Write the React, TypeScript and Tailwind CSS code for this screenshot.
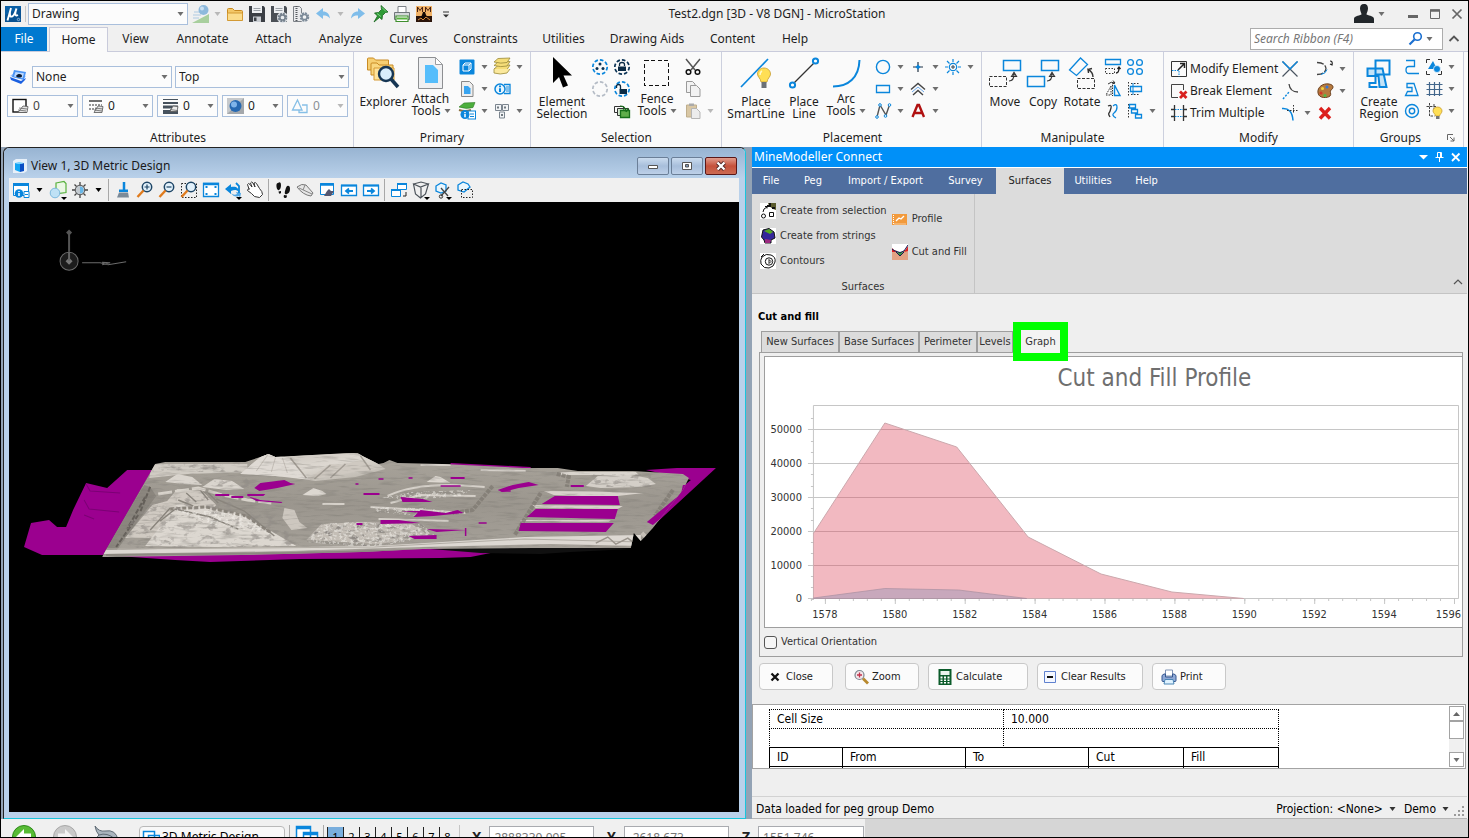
import React, { ReactNode, useState } from "react";

const BLUE = "#0a86dc";

/* ---------- shared pieces ---------- */

function Caret({ className = "text-[#6e6e6e]" }: { className?: string }) {
  return (
    <svg viewBox="0 0 7 4" className={`h-1 w-[7px] shrink-0 ${className}`} aria-hidden="true">
      <path d="M0.5 0h6L3.5 4z" fill="currentColor" />
    </svg>
  );
}

function IconCell({ label, children }: { label: string; children: ReactNode }) {
  return (
    <button aria-label={label} className="flex h-[22px] w-[22px] shrink-0 items-center justify-center">
      <svg viewBox="0 0 22 22" className="h-[22px] w-[22px]" fill="none">
        {children}
      </svg>
    </button>
  );
}

function CaretCell({ label = "More", faded = false }: { label?: string; faded?: boolean }) {
  return (
    <button aria-label={label} className="flex h-[22px] w-[13px] shrink-0 items-center justify-center">
      <Caret className={faded ? "text-[#b8b8b8]" : "text-[#6e6e6e]"} />
    </button>
  );
}

function Combo({ label, value, className, icon, faded }: { label: string; value: string; className: string; icon?: ReactNode; faded?: boolean }) {
  return (
    <label className={`flex h-[22px] items-center border border-[#a9bfdc] bg-[#fcfcfc] px-[3px] ${className}`}>
      {icon}
      <select aria-label={label} defaultValue={value} className={`h-5 min-w-0 flex-1 appearance-none bg-transparent text-xs outline-none ${faded ? "text-[#8b8f94]" : "text-[#1e1e1e]"}`}>
        <option>{value}</option>
      </select>
      <Caret className={faded ? "text-[#b8b8b8]" : "text-[#6e6e6e]"} />
    </label>
  );
}

function BigButton({ lines, className, caret, icon }: { lines: string[]; className: string; caret?: boolean; icon: ReactNode }) {
  return (
    <button className={`flex shrink-0 flex-col items-center pt-1 text-xs leading-3 whitespace-nowrap text-[#1e1e1e] ${className}`}>
      <svg viewBox="0 0 36 34" className="h-[34px] w-9 shrink-0" fill="none">
        {icon}
      </svg>
      <span className={`flex flex-col items-center ${caret ? "pt-[3px]" : "pt-1.5"}`}>
        <span>{lines[0]}</span>
        {lines[1] && (
          <span className="flex items-center gap-[3px]">
            {lines[1]}
            {caret && <Caret />}
          </span>
        )}
      </span>
    </button>
  );
}

function Group({ title, className, children, corner }: { title: string; className: string; children: ReactNode; corner?: ReactNode }) {
  return (
    <section className={`flex shrink-0 flex-col border-r border-[#ccd0de] ${className}`}>
      <div className="flex h-[78px] items-start">{children}</div>
      <footer className="flex h-4 items-center justify-center text-xs text-[#1e1e1e]">
        <span className="flex-1 pr-1 text-center">{title}</span>
        {corner}
      </footer>
    </section>
  );
}

/* ---------- title bar ---------- */

function TitleBar() {
  return (
    <header className="flex h-[26px] shrink-0 items-center pl-1 text-xs">
      <svg viewBox="0 0 16 16" className="h-4 w-4" aria-label="MicroStation">
        <rect width="16" height="16" fill="#0b5fa5" />
        <path d="M0 16V9L16 2v14z" fill="#084a86" opacity=".6" />
        <path d="M6 2 2.500 14.500M5 6c-.500 4 .500 5 2 4.500s3-3 4.500-8M11.500 2.500c-2 6-1.500 8 1.500 6.500" stroke="#fff" strokeWidth="1.900" fill="none" />
        <circle cx="13.500" cy="13.500" r="1.200" fill="none" stroke="#cfe3f5" strokeWidth=".6" />
      </svg>
      <span className="mr-0.5 ml-1 h-4 w-px bg-[#c8c8c8]" />
      <Combo label="Workflow" value="Drawing" className="w-[160px]" />
      <div className="ml-px flex items-center">
        <IconCell label="Model">
          <path d="M3 20 20 11v9z" fill="#a8cf9e" />
          <path d="M5 9h8M4 12h8M4 15h6" stroke="#c3d6e6" strokeWidth="1.500" />
          <circle cx="14.500" cy="7" r="5" fill="#8db9dc" />
          <circle cx="13" cy="5.500" r="2" fill="#c9e0f1" />
        </IconCell>
        <CaretCell faded />
        <IconCell label="Open">
          <path d="M3.500 17V6.500q0-1 1-1h4l2 2h7q1 0 1 1V17z" fill="#f3c766" stroke="#c88a20" />
          <path d="M3.500 17.500V10h15v7.500z" fill="#fbdc8b" stroke="#d39a34" />
        </IconCell>
        <IconCell label="Save">
          <path d="M3 3h14.500l1.500 1.500V19H3z" fill="#3b3f45" />
          <path d="M6 3h10v7H6z" fill="#eef0f2" />
          <path d="M7.500 5.500h7M7.500 7.500h7" stroke="#9aa0a6" />
          <path d="M7 13.500h8V19H7z" fill="#c9cdd2" />
          <path d="M8 14.500h2.500V18H8z" fill="#3b3f45" />
        </IconCell>
        <IconCell label="Save Settings">
          <path d="M3 3h14.500l1.500 1.500V19H3z" fill="#4b5056" />
          <path d="M6 3h10v7H6z" fill="#eef0f2" />
          <path d="M7.500 5.500h7M7.500 7.500h7" stroke="#9aa0a6" />
          <circle cx="14.500" cy="14.500" r="5.500" fill="#e8ebee" />
          <circle cx="14.500" cy="14.500" r="3.600" stroke="#76828e" strokeWidth="2.400" strokeDasharray="2 .8" />
          <circle cx="14.500" cy="14.500" r="2.600" stroke="#76828e" strokeWidth="1.500" />
        </IconCell>
        <IconCell label="Compress">
          <path d="M3.500 3.500h6l2 2V18.500h-8z" fill="#e9eaec" stroke="#7c8187" />
          <path d="M6.500 3v15" stroke="#55595e" strokeWidth="2" strokeDasharray="1 1" />
          <circle cx="14.500" cy="14" r="5" fill="#f2f3f4" />
          <circle cx="14.500" cy="14" r="3.600" stroke="#7c8a98" strokeWidth="2.400" strokeDasharray="2 .8" />
          <circle cx="14.500" cy="14" r="2.600" stroke="#7c8a98" strokeWidth="1.500" />
        </IconCell>
        <IconCell label="Undo">
          <path d="m4 10.500 7-5.500v3.500c4 0 6.500 2.500 7 7-2-2.500-4-3-7-3V16z" fill="#7fbdea" />
        </IconCell>
        <CaretCell faded />
        <IconCell label="Redo">
          <path d="m18 10.500-7-5.500v3.500c-4 0-6.500 2.500-7 7 2-2.500 4-3 7-3V16z" fill="#7fbdea" />
        </IconCell>
        <IconCell label="Pin">
          <path d="m12 2.500 7 6.500-2.500.500-3 3-.500 4-2.500-2-5.500 4.500 3.500-6-3-3 4-.500 3-3z" fill="#2d9a35" stroke="#16641c" strokeWidth=".8" />
          <path d="m13 4.500 4 4M8 10.500l4 3" stroke="#7fd184" />
        </IconCell>
        <IconCell label="Print">
          <path d="M7 3.500h8v6H7z" fill="#fff" stroke="#7c8187" />
          <path d="M3.500 9.500h15v7h-15z" fill="#d5d8da" stroke="#70767b" />
          <path d="M5 13h12v5.500H5z" fill="#fff" stroke="#3f8f2e" strokeWidth="1.200" />
          <path d="M6 15.500h10" stroke="#58b13e" strokeWidth="2" />
        </IconCell>
        <IconCell label="MineModeller">
          <rect x="3" y="3" width="16" height="16" fill="#f1b368" />
          <rect x="3" y="13" width="16" height="6" fill="#2a140a" />
          <path d="M4.500 9V4l2.500 3.500L9.500 4v5M12.500 9V4L15 7.500 17.500 4v5" stroke="#4a2313" />
          <path d="m7 16 2-4 1-3h2l1 3 3 4z" fill="#120805" />
          <path d="m5 17 3-2 2 2 3-3 4 3" stroke="#d98a3a" />
        </IconCell>
        <IconCell label="Customize">
          <path d="M8 9h6" stroke="#333" />
          <path d="M8 11.500h6l-3 3z" fill="#333" />
        </IconCell>
      </div>
      <h1 className="flex-1 text-center text-xs text-[#1e1e1e]">Test2.dgn [3D - V8 DGN] - MicroStation</h1>
      <div className="ml-64 flex items-center">
        <IconCell label="Account">
          <path d="M11 1c3 0 4 2 4 4.500S13.500 10 13.500 11.500C17 13 21 13 21 16v4H1v-4c0-3 4-3 7.500-4.500C8.500 10 7 8 7 5.500S8 1 11 1z" fill="#22272b" />
        </IconCell>
        <CaretCell />
        <span className="w-3.5" />
        <IconCell label="Minimize"><path d="M6 13.500h10" stroke="#666" strokeWidth="3" /></IconCell>
        <IconCell label="Restore">
          <path d="M6.500 7h9v8.500h-9z" stroke="#666" />
          <path d="M6 7.500h10" stroke="#666" strokeWidth="2.500" />
        </IconCell>
        <IconCell label="Close"><path d="m6.500 6.500 9 9m0-9-9 9" stroke="#666" strokeWidth="1.700" /></IconCell>
      </div>
    </header>
  );
}

/* ---------- ribbon tabs ---------- */

const TABS: [string, string][] = [
  ["View", "w-[55px]"],
  ["Annotate", "w-[79px]"],
  ["Attach", "w-[63px]"],
  ["Analyze", "w-[71px]"],
  ["Curves", "w-[65px]"],
  ["Constraints", "w-[89px]"],
  ["Utilities", "w-[67px]"],
  ["Drawing Aids", "w-[100px]"],
  ["Content", "w-[71px]"],
  ["Help", "w-[54px]"],
];

function RibbonTabs() {
  return (
    <nav className="flex h-[25px] shrink-0 items-stretch border-b border-[#c9cbdb] text-xs text-[#1e1e1e]">
      <button className="w-[46px] bg-[#0079d0] text-white">File</button>
      <button className="-mb-px ml-0.5 w-[59px] border border-b-0 border-[#c9cbdb] bg-[#fafafa]">Home</button>
      {TABS.map(([name, width]) => (
        <button key={name} className={`shrink-0 ${width}`}>{name}</button>
      ))}
      <div className="flex flex-1 items-start justify-end pr-[3px]">
        <label className="mt-px flex h-[22px] w-[193px] items-center border border-[#acacac] bg-white pl-[3px]">
          <input aria-label="Search Ribbon" placeholder="Search Ribbon (F4)" className="w-[150px] bg-transparent text-xs italic outline-none placeholder:text-[#767676]" />
          <svg viewBox="0 0 22 22" className="h-[22px] w-[22px]" fill="none">
            <circle cx="13.500" cy="8.500" r="3.800" stroke="#1a6fd0" strokeWidth="1.600" />
            <path d="m10.500 11.500-5 5" stroke="#1a6fd0" strokeWidth="2.200" />
          </svg>
          <Caret />
        </label>
        <IconCell label="Collapse ribbon"><path d="m6.500 14 4.500-4.500 4.500 4.500" stroke="#555" strokeWidth="1.800" /></IconCell>
      </div>
    </nav>
  );
}

/* ---------- ribbon ---------- */

const smallIcon = "mr-0.5 h-[18px] w-5 shrink-0";

function AttributesGroup() {
  return (
    <Group title="Attributes" className="w-[353px] pl-1.5">
      <div className="flex flex-col gap-[7px] pt-[14px]">
        <div className="flex items-center">
          <svg viewBox="0 0 18 14" className="mr-[3px] ml-0.5 h-[14px] w-[18px]">
            <path d="M1 6 14 9.500 17 6 5 3z" fill="#9fc4ff" />
            <path d="m5 0 12 2-2 8L3 7z" fill="#4c95f5" />
            <path d="m6.500 2 8.500 1.200-1.500 5L5 6.500z" fill="#bcd9ff" />
            <path d="M7 6c2-3 6-2 6 0S8 8 7 6z" fill="#0b1c34" />
            <path d="m1 7 11 4 5-3-1 2-4 4L2 10z" fill="#1a5fe0" />
          </svg>
          <Combo label="Template" value="None" className="ml-0.5 w-[140px]" />
          <Combo label="Level" value="Top" className="ml-[3px] w-[174px]" />
        </div>
        <div className="flex gap-1">
          <Combo label="Color" value="0" className="w-[71px] [&_select]:text-[#444]" icon={
            <svg viewBox="0 0 20 18" className={smallIcon}>
              <rect x="2" y="2.500" width="13" height="12.500" fill="#fff" stroke="#111" strokeWidth="1.400" />
              <path d="M7 15.500 12 9l5 .5-1 6z" fill="#e4e4e4" stroke="#555" strokeWidth=".8" /><path d="m7 13 8 1M8 11l8 1" stroke="#666" strokeWidth=".8" />
            </svg>} />
          <Combo label="Line style" value="0" className="w-[71px]" icon={
            <svg viewBox="0 0 20 18" className={smallIcon}>
              <path d="M3 4h13" stroke="#333" strokeWidth="1.400" /><path d="M3 8h13M3 12h13" stroke="#333" strokeWidth="1.200" strokeDasharray="2 1" />
              <path d="M8 15.500 12 9l5 .5-1 6z" fill="#e4e4e4" stroke="#555" strokeWidth=".8" /><path d="m8 13 8 1M9 11l8 1" stroke="#666" strokeWidth=".8" />
            </svg>} />
          <Combo label="Line weight" value="0" className="w-[61px]" icon={
            <svg viewBox="0 0 20 18" className={smallIcon}>
              <path d="M2 2.500h15" stroke="#47525d" /><path d="M2 6h15" stroke="#47525d" strokeWidth="2" /><path d="M2 10h15" stroke="#47525d" strokeWidth="3" /><path d="M2 15h15" stroke="#47525d" strokeWidth="4" />
              <path d="M9 14.500 12 9l5 .5-1 5z" fill="#ececec" stroke="#555" strokeWidth=".8" /><path d="m9 12.500 7 1" stroke="#666" strokeWidth=".8" />
            </svg>} />
          <Combo label="Material" value="0" className="w-[61px]" icon={
            <svg viewBox="0 0 20 18" className={smallIcon}>
              <rect x="1" y="1" width="17" height="16" fill="#c6c9cc" /><path d="M1 17 18 1v16z" fill="#a4a8ac" />
              <circle cx="9.500" cy="9" r="6" fill="#2769b2" /><circle cx="8" cy="7.500" r="3" fill="#7fb4ea" />
            </svg>} />
          <Combo label="Transparency" value="0" faded className="w-[61px]" icon={
            <svg viewBox="0 0 20 18" className={smallIcon} fill="none">
              <path d="m1.500 13 5-10 4.500 10zM11 8h5v7.500H8V13" stroke="#86bfe6" strokeWidth="1.300" />
            </svg>} />
        </div>
      </div>
    </Group>
  );
}

const cube = (
  <>
    <rect x="3.500" y="3.500" width="15" height="15" rx="1" fill={BLUE} />
    <path d="M7 9h6v6H7zM7 9l2-2h6v6l-2 2M13 9l2-2" stroke="#fff" />
  </>
);

function PrimaryGroup() {
  return (
    <Group title="Primary" className="w-[177px] pl-1">
      <BigButton lines={["Explorer"]} className="w-[50px]" icon={
        <>
          <path d="M2.500 14V3q0-1 1-1h5l2 2h13v10z" fill="#f6cf72" stroke="#c98b24" />
          <path d="M6 19V8q0-1 1-1h5l2 2h14v10z" fill="#f9d77f" stroke="#c98b24" />
          <path d="M9 24V12h20v12z" fill="#ffe39a" stroke="#d59a35" />
          <circle cx="21" cy="18" r="7" fill="#d9eefb" stroke="#163654" strokeWidth="2.400" />
          <path d="m26 23 7 8" stroke="#163654" strokeWidth="3.500" />
        </>} />
      <BigButton lines={["Attach", "Tools"]} caret className="w-[46px]" icon={
        <>
          <path d="M5.500 1.500h17l7 7v24h-24z" fill="#eff0f2" stroke="#8d8f92" />
          <path d="M22.500 1.500v7h7z" fill="#fff" stroke="#9b9da0" />
          <path d="M12 9h8l5 5v13H12z" fill="#55bdfb" />
        </>} />
      <div className="ml-0.5 grid grid-cols-[22px_13px_22px_13px] pt-1">
        <IconCell label="Models">{cube}</IconCell>
        <CaretCell />
        <IconCell label="Levels">
          {[13, 9.5, 6].map((y) => (
            <path key={y} d={`M3 ${y} l4-3.500 12-.500-3 4.500q-6 1.500-13-.500z`} fill="#f5dd78" stroke="#9b8a3a" strokeWidth=".8" />
          ))}
          <path d="M3 13v4q6 2 13 0l3-4" stroke="#9b8a3a" strokeWidth=".8" fill="#fbe99d" />
        </IconCell>
        <CaretCell />
        <IconCell label="References">
          <path d="M5.500 3.500h8l3.500 3.500v11.500H5.500z" fill="#eee" stroke="#888" />
          <path d="M8 8h4l2.500 2.500V16H8z" fill="#38a4f0" />
        </IconCell>
        <CaretCell />
        <IconCell label="Properties">
          <path d="M13 6.500h6v9h-6" stroke={BLUE} strokeWidth="1.300" /><path d="M15 9h3M15 11h3M15 13h3" stroke={BLUE} />
          <circle cx="9" cy="11" r="5" fill="#e8f5fd" stroke={BLUE} strokeWidth="1.500" />
          <path d="M9 7.500v1.700M9 10.200V14" stroke={BLUE} strokeWidth="2" />
        </IconCell>
        <span />
        <IconCell label="Level Manager">
          <path d="m3 7 5-4 11-.500-2 5q-7 2-14-.500z" fill="#4caf3d" stroke="#2d7a24" strokeWidth=".6" />
          <path d="M3 10q6 2 12 0" stroke="#8a7040" strokeWidth="2" />
          <rect x="12" y="11" width="7.500" height="8" fill="#fff" stroke={BLUE} /><path d="M14 14h4M14 16.500h4" stroke={BLUE} />
          <circle cx="9" cy="14.500" r="4.500" fill={BLUE} /><path d="M9 12v1.200M9 14v3.200" stroke="#fff" strokeWidth="1.500" />
        </IconCell>
        <CaretCell />
        <IconCell label="Keyin">
          <path d="M4.500 4.500h6v6h-6zM11.500 4.500h6v6h-6zM8.500 12h5v6h-5z" fill="#f2f4f6" stroke="#7b858f" />
          <path d="M7 6.500v2M14 6.500v2M11 14v2" stroke="#46505a" strokeWidth="1.500" />
        </IconCell>
        <CaretCell />
      </div>
    </Group>
  );
}

function SelectionGroup() {
  const ring = (color: string) => <circle cx="11" cy="11" r="7.200" stroke={color} strokeWidth="1.700" strokeDasharray="3.600 2" />;
  return (
    <Group title="Selection" className="w-[191px] pl-[5px]">
      <BigButton lines={["Element", "Selection"]} className="w-[52px]" icon={<path d="M9 1v26l6-6 4 10.500 5-2-4.500-10H28z" fill="#000" />} />
      <div className="ml-px grid grid-cols-[22px_22px] pt-1">
        <IconCell label="Select all">{ring(BLUE)}<circle cx="11" cy="8" r="1.500" fill="#0b3355" /><circle cx="8" cy="12.500" r="1.500" fill="#0b3355" /><circle cx="14" cy="12.500" r="1.500" fill="#0b3355" /></IconCell>
        <IconCell label="Lock">{ring("#0b3355")}<path d="M7 10.500h8V15H7z" fill="#0b2b45" /><path d="M8.500 10V8.500q0-2 2.500-2t2.500 2V10" stroke="#0b2b45" strokeWidth="1.300" /></IconCell>
        <IconCell label="Select none">{ring("#b5bcc6")}</IconCell>
        <IconCell label="Unlock">{ring(BLUE)}<path d="M8.500 11h7.500v5H8.500z" fill="#0b2b45" /><path d="M9.500 11V8.500q0-2-2-2t-2 2V10" stroke="#0b2b45" strokeWidth="1.300" /></IconCell>
        <span />
        <IconCell label="Change selection">
          <path d="M3.500 6.500h9v6h-9z" stroke="#333" /><path d="M6.500 8.500h11v7h-11z" fill="#d6ead2" stroke="#333" />
          <path d="M9.500 10.500h9v7h-9z" fill="#5fae4a" stroke="#17701a" strokeWidth="1.300" /><path d="M9 6q5 0 6 5M12 9.500l3.500 2L17 8" stroke="#17701a" strokeWidth="1.200" />
        </IconCell>
      </div>
      <BigButton lines={["Fence", "Tools"]} caret className="w-12" icon={<path d="M5.500 4.500h24v25h-24z" stroke="#111" strokeDasharray="4 2.500" shapeRendering="crispEdges" />} />
      <div className="ml-px grid grid-cols-[22px_13px] pt-1">
        <IconCell label="Cut">
          <path d="m4 3 9 11M18 3 9 14" stroke="#555" strokeWidth="1.500" />
          <circle cx="6.500" cy="16" r="2.300" stroke="#111" strokeWidth="1.500" /><circle cx="15.500" cy="16" r="2.300" stroke="#111" strokeWidth="1.500" />
        </IconCell>
        <span />
        <IconCell label="Copy to clipboard">
          <path d="M4.500 3.500h6l2.500 2.500v8.500H4.500z" fill="#f2f2f2" stroke="#9a9a9a" /><path d="M8.500 7.500h6L18 11v7.500H8.500z" fill="#f2f2f2" stroke="#9a9a9a" />
        </IconCell>
        <span />
        <IconCell label="Paste">
          <path d="M4.500 5h10v12h-10z" fill="#d9c7a4" stroke="#bfae8c" /><path d="M7 3.500h5V6H7z" fill="#aaa" /><path d="M9.500 8.500h5L18 12v6.500H9.500z" fill="#ececec" stroke="#b5b5b5" />
        </IconCell>
        <CaretCell faded />
      </div>
    </Group>
  );
}

function PlacementGroup() {
  return (
    <Group title="Placement" className="w-[260px] pl-1.5">
      <BigButton lines={["Place", "SmartLine"]} className="w-14" icon={
        <>
          <path d="M3 31 30 3" stroke={BLUE} strokeWidth="1.700" />
          <path d="M26 12c4 0 6.500 3 6.500 6s-3 4-3.500 8h-6c-.500-4-3.500-5-3.500-8s2.500-6 6.500-6z" fill="#ffdf55" stroke="#c79a2c" strokeWidth=".8" />
          <path d="M24 15q-2 1-2 4" stroke="#fff8cc" strokeWidth="1.500" /><path d="M23.500 26h5v6h-5z" fill="#6b7076" />
        </>} />
      <BigButton lines={["Place", "Line"]} className="ml-px w-[38px]" icon={
        <><path d="M7 28 29 6" stroke="#333" strokeWidth="1.200" /><circle cx="6.500" cy="29" r="2.600" stroke={BLUE} strokeWidth="2" fill="#fff" /><circle cx="29.500" cy="5" r="2.600" stroke={BLUE} strokeWidth="2" fill="#fff" /></>} />
      <BigButton lines={["Arc", "Tools"]} caret className="w-[46px]" icon={<path d="M5 30.500C20 30.500 31 22 31.500 4" stroke={BLUE} strokeWidth="2" />} />
      <div className="ml-[3px] grid grid-cols-[22px_13px_22px_13px_22px_13px] pt-1">
        <IconCell label="Circle"><circle cx="11" cy="11" r="6.600" stroke={BLUE} strokeWidth="1.400" /></IconCell>
        <CaretCell />
        <IconCell label="Point"><path d="M11 6v10M6 11h10" stroke="#234" strokeWidth="1.200" /><path d="M11 8.500 13.500 11 11 13.500 8.500 11z" fill={BLUE} /></IconCell>
        <CaretCell />
        <IconCell label="Active point">
          <path d="M11 3v3M11 16v3M3 11h3M16 11h3M5 5l2.500 2.500M14.500 14.500 17 17M17 5l-2.500 2.500M7.500 14.500 5 17" stroke={BLUE} strokeWidth="1.200" /><circle cx="11" cy="11" r="3.700" stroke={BLUE} strokeWidth="1.200" /><path d="M9 11h4M11 9v4" stroke="#345" />
        </IconCell>
        <CaretCell />
        <IconCell label="Block"><path d="M4.500 7.500h13v7h-13z" stroke={BLUE} strokeWidth="1.300" /></IconCell>
        <CaretCell />
        <IconCell label="Parallel">
          <path d="m4 11.500 7-6 7 6" stroke="#444" strokeWidth="1.400" /><path d="m5 14 6-5 6 5" stroke="#6aa7e8" /><path d="m6 17 5-4.500 5 4.500" stroke="#444" strokeWidth="1.400" />
        </IconCell>
        <CaretCell /><span /><span />
        <IconCell label="Curve">
          <path d="m5 17 3-12 6 10 3.500-10" stroke="#555" strokeWidth="1.400" />
          {[[5, 17], [8, 5], [13.5, 16], [17.5, 5]].map(([x, y]) => <circle key={x} cx={x} cy={y} r="1.300" fill="#fff" stroke={BLUE} />)}
        </IconCell>
        <CaretCell />
        <IconCell label="Text"><path d="m5.500 17 5-12h1.500l5 12M7.500 13h7.500" stroke="#b01010" strokeWidth="2.400" /></IconCell>
        <CaretCell />
      </div>
    </Group>
  );
}

function ManipulateGroup() {
  return (
    <Group title="Manipulate" className="w-[182px] pl-1">
      <BigButton lines={["Move"]} className="w-[38px]" icon={
        <><path d="M16.500 4.500h17v10h-17z" stroke={BLUE} strokeWidth="1.500" /><path d="M2.500 20.500h17v10h-17z" stroke="#333" strokeDasharray="3 1.500" /><path d="M22 25q5 0 5-7M24.500 20.500l2.500-4 2.500 4z" stroke="#333" strokeWidth="1.200" /></>} />
      <BigButton lines={["Copy"]} className="w-[38px]" icon={
        <><path d="M16.500 4.500h17v10h-17zM2.500 20.500h17v10h-17z" stroke={BLUE} strokeWidth="1.500" /><path d="M22 25q5 0 5-7M24.500 20.500l2.500-4 2.500 4z" stroke="#333" strokeWidth="1.200" /></>} />
      <BigButton lines={["Rotate"]} className="w-10" icon={
        <><path d="m5.500 14 11-12 7 6.500-11 11z" stroke={BLUE} strokeWidth="1.300" /><path d="M13.500 22.500h17v10h-17z" stroke="#333" strokeDasharray="3 1.500" /><path d="M29 21q0-5-5-7.500l.500 3.500M24 13.500l4-1" stroke="#333" strokeWidth="1.400" /></>} />
      <div className="grid grid-cols-[22px_22px_13px] pt-1">
        <IconCell label="Stretch"><path d="M3.500 3.500h15v5h-15z" stroke={BLUE} strokeWidth="1.300" /><path d="M3.500 12.500h9v5h-9z" stroke="#333" strokeDasharray="1.500 1.500" /><path d="M14 17q3 0 3-5M15.500 13l1.500-2 1.500 2" stroke="#222" strokeWidth="1.300" /></IconCell>
        <IconCell label="Array">{[[6.5, 6.5], [15.5, 6.5], [6.5, 15.5], [15.5, 15.5]].map(([x, y], i) => <circle key={i} cx={x} cy={y} r="2.900" stroke={BLUE} strokeWidth="1.300" />)}</IconCell>
        <span />
        <IconCell label="Mirror"><path d="M10.500 7v11M9 8v9H4z" stroke="#333" strokeDasharray="1.500 1" /><path d="M12.500 7v10.500H18z" stroke={BLUE} strokeWidth="1.400" /><path d="M6 6q3-3 7-1l-2-2.500M13 5l-3 1" stroke="#333" /></IconCell>
        <IconCell label="Align"><path d="M4.500 4v14" stroke="#333" strokeDasharray="1.500 1.500" /><path d="M7 5.500h8M7 16.500h8" stroke="#333" strokeDasharray="1.500 1.500" /><path d="M6.500 8.500h11v5h-11z" stroke={BLUE} strokeWidth="1.300" /><path d="M9 5v12" stroke={BLUE} /></IconCell>
        <span />
        <IconCell label="Move parallel"><path d="M6 6q4-2 3 2t-2 5 1 4" stroke="#333" strokeWidth="1.300" /><path d="M11 6q4-3 4 1t-3 6 2 5" stroke={BLUE} strokeWidth="1.300" /></IconCell>
        <IconCell label="Align edges"><path d="M4.500 4v14" stroke="#333" strokeDasharray="1.500 1.500" /><path d="M5.500 4.500h6v3.500h-6zM7.500 9.500h6V13h-6zM11.500 14.500h6V18h-6z" stroke={BLUE} strokeWidth="1.300" /></IconCell>
        <CaretCell />
      </div>
    </Group>
  );
}

function ModifyGroup() {
  const row = "flex h-[22px] items-center text-xs whitespace-nowrap text-[#1e1e1e]";
  const ic = "h-[22px] w-[22px]";
  return (
    <Group title="Modify" className="w-[190px] pl-1">
      <div className="flex w-[111px] flex-col pt-1.5">
        <button className={row}>
          <svg viewBox="0 0 22 22" className={ic} fill="none"><path d="M3.500 3.500h15v15h-15z" stroke="#333" /><path d="M4 12.500h7v6" stroke={BLUE} strokeDasharray="1.500 1" /><path d="m10 12 6-6m-4-.500h4.500V10" stroke="#222" strokeWidth="1.500" /></svg>
          Modify Element
        </button>
        <button className={row}>
          <svg viewBox="0 0 22 22" className={ic} fill="none"><path d="M10 17.500H3.500v-13h12V10" stroke="#444" /><path d="m12 11.500 6.500 6.500m0-6.500L12 18" stroke="#d8201e" strokeWidth="2.800" /></svg>
          Break Element
        </button>
        <button className={row}>
          <svg viewBox="0 0 22 22" className={ic} fill="none"><path d="M6.500 3v16M15.500 3v16M3 7.500h3M16 7.500h3M3 14.500h3M16 14.500h3" stroke="#333" strokeWidth="1.300" /><path d="M7 7.500h8M7 14.500h8" stroke={BLUE} strokeDasharray="1.500 1" /></svg>
          Trim Multiple
        </button>
      </div>
      <div className="grid grid-cols-[22px_13px_22px_13px] pt-1.5">
        <IconCell label="Trim"><path d="m3.500 18.500 15-15M3.500 3.500l15 15" stroke="#4a5560" strokeWidth="1.200" /><path d="m3.500 3.500 7.500 7.500 7.500-7.500" stroke={BLUE} strokeWidth="1.400" /></IconCell>
        <span />
        <IconCell label="Insert vertex"><path d="M3 4.500q8 0 9 6-1 6-9 6" stroke="#444" strokeDasharray="7 1.500" strokeWidth="1.300" /><path d="M7 16.500q5-1 6-5" stroke={BLUE} /><path d="M16 3q3 0 2 4l-2-1" stroke="#222" strokeWidth="1.200" /></IconCell>
        <CaretCell />
        <IconCell label="Trim to intersection"><path d="m4 19 6-7" stroke={BLUE} strokeDasharray="2 1.500" strokeWidth="1.400" /><path d="M10 4q1 8 9 8" stroke="#444" strokeWidth="1.300" /></IconCell>
        <span />
        <IconCell label="Change attributes">
          <path d="M4 13C3 7 9 3 15 4s4 5 2 6 1 4-1 6-11 3-12-3z" fill="#b67a3e" stroke="#6f4320" /><circle cx="13" cy="7" r="1.500" fill="#3478d8" /><circle cx="8.500" cy="8.500" r="1.500" fill="#f3d23b" /><circle cx="7" cy="13" r="1.500" fill="#d9342b" /><circle cx="11" cy="15.500" r="1.500" fill="#54b948" />
        </IconCell>
        <CaretCell />
        <IconCell label="Fillet"><path d="M3 6.500q10-1 11 12" stroke={BLUE} strokeWidth="1.500" /><path d="M14.500 3v9M8 8.500h11" stroke="#333" strokeDasharray="1.500 1.500" /></IconCell>
        <CaretCell />
        <IconCell label="Delete"><path d="m6 6 10 10.500M16 6 6 16.500" stroke="#dc1f1c" strokeWidth="3.400" /></IconCell>
        <span />
      </div>
    </Group>
  );
}

function GroupsGroup() {
  return (
    <Group title="Groups" className="w-[110px] pl-1" corner={
      <button aria-label="Groups settings" className="pr-2"><svg viewBox="0 0 8 8" className="h-2 w-2" fill="none" stroke="#666"><path d="M.500 6V.500H6M3 3l4 4M7 3.500V7H3.500" /></svg></button>
    }>
      <BigButton lines={["Create", "Region"]} className="w-[42px]" icon={
        <>
          <path d="M6.500 12.500h15l4 18.500h-7l-1-11h-11z" fill="#a9d8f7" fillOpacity=".7" stroke={BLUE} strokeWidth="2" />
          <path d="M14.500 4.500h14v14h-14z" stroke={BLUE} strokeWidth="2" />
          <path d="M14.500 18.500v8.500h-6v4h8" stroke={BLUE} strokeWidth="2" />
        </>} />
      <div className="ml-px grid grid-cols-[22px_22px_13px] pt-1">
        <IconCell label="Complex chain"><path d="M5 4.500h8.500v6H8q-3 0-3 3.500t3 3.500h10" stroke={BLUE} strokeWidth="1.300" /></IconCell>
        <IconCell label="Add to group"><path d="M3.500 7V3.500H7M15 3.500h3.500V7M18.500 15v3.500H15M7 18.500H3.500V15" stroke="#333" /><path d="m5 13 5-8 4 8z" fill={BLUE} /><circle cx="14" cy="13" r="3.500" fill={BLUE} stroke="#fff" strokeWidth=".7" /></IconCell>
        <CaretCell />
        <IconCell label="Complex shape"><path d="M6 5.500h7l4 12H4.500l2-4H11V9.500H6z" stroke={BLUE} strokeWidth="1.300" /></IconCell>
        <IconCell label="Named group"><path d="M6.500 4v14M11.500 4v14M16.500 4v14M3.500 6.500h16M3.500 11.500h16M3.500 16.500h16" stroke="#43678c" strokeWidth="1.200" /></IconCell>
        <CaretCell />
        <IconCell label="Group hole"><circle cx="11" cy="11" r="6.500" stroke={BLUE} strokeWidth="1.400" /><circle cx="11" cy="11" r="2.700" stroke={BLUE} strokeWidth="1.400" /></IconCell>
        <IconCell label="Graphic group"><path d="M6.500 3v13h5M3.500 6.500H14M11 4v6" stroke="#444" strokeDasharray="2.500 1" /><path d="M14.500 7c3 0 4.500 2 4.500 4s-2 3-2.500 5h-4c0-2-2.500-3-2.500-5s1.500-4 4.500-4z" fill="#ffdf55" stroke="#c79a2c" strokeWidth=".8" /><path d="M13 16h3.500v3H13z" fill="#777" /></IconCell>
        <CaretCell />
      </div>
    </Group>
  );
}

/* ---------- 3D view ---------- */

function Terrain() {
  const P = "#9b008f";
  return (
    <svg viewBox="9 202 729 610" preserveAspectRatio="xMidYMid slice" className="h-full w-full" role="img" aria-label="3D terrain surface">
      <defs>
        <linearGradient id="ground" x1="0" y1="0" x2="0" y2="1"><stop offset="0" stopColor="#aaa59c" /><stop offset=".5" stopColor="#9b968e" /><stop offset="1" stopColor="#a8a39b" /></linearGradient>
        <linearGradient id="hill" x1="0" y1="0" x2="1" y2="1"><stop offset="0" stopColor="#c3bdb5" /><stop offset=".5" stopColor="#ddd8d1" /><stop offset="1" stopColor="#b2ada4" /></linearGradient>
        <clipPath id="land"><path d="M103 555 155 464l10-2h80l15-5 8-3 7 3 75-4h7l5 3 16 8 5-1 6-3 8 3 45 1 80 4h35l20 3h55l50 3 6 4-6 12-8 10-22 28-12 13-7-8-3 15h-98l-110 1-60 3-120 3-140 2z" /></clipPath>
        <filter id="grain" x="0" y="0" width="100%" height="100%">
          <feTurbulence type="fractalNoise" baseFrequency=".05 .35" numOctaves="3" seed="7" />
          <feColorMatrix values="0 0 0 0 .2  0 0 0 0 .19  0 0 0 0 .17  3 0 0 0 -1.500" />
          <feComposite in2="SourceGraphic" operator="in" />
        </filter>
        <filter id="shade" x="0" y="0" width="100%" height="100%">
          <feTurbulence type="fractalNoise" baseFrequency=".12 .2" numOctaves="3" seed="11" />
          <feColorMatrix values="0 0 0 0 .28  0 0 0 0 .26  0 0 0 0 .24  5 0 0 0 -2.700" />
          <feComposite in2="SourceGraphic" operator="in" />
        </filter>
        <filter id="speck" x="0" y="0" width="100%" height="100%">
          <feTurbulence type="fractalNoise" baseFrequency=".28 .4" numOctaves="3" seed="3" />
          <feColorMatrix values="0 0 0 0 .92  0 0 0 0 .9  0 0 0 0 .86  6 0 0 0 -2.900" />
          <feComposite in2="SourceGraphic" operator="in" />
        </filter>
      </defs>
      <rect x="9" y="202" width="729" height="610" fill="#000" />
      <g stroke="#6b6b6b" fill="none">
        <path d="M69 234v18" stroke="#555" strokeWidth="2" /><path d="m69 230 3 3-3 3-3-3z" fill="#555" stroke="none" />
        <circle cx="69" cy="261.500" r="9" fill="#1c1c1c" /><path d="m69 258 3.500 3.500L69 265l-3.500-3.500z" fill="#777" stroke="none" />
        <path d="M69 252v9" stroke="#666" strokeWidth="2" /><path d="M82 263h18l8 2 18-3M102 265l8-2-8-.500" />
      </g>
      <path d="m24 547 7-24 18-3 8 7h9l7-17 13-27 21 5 20-18h25l-49 85H42z" fill={P} />
      <path d="m86 484 4 7 30 2M84 500l5 9 30 3M84 515l10 4" stroke="#7c0075" fill="none" />
      <path d="m103 555 72 5 35 2 90-3 140-1 30-1 20-4-25-3-35-2H110z" fill={P} />
      <path d="m645 470 31-2h39l-65 60-10-8 50-40z" fill={P} />
      <path d="m450 463 40 2 40 2v3l-80-3z" fill={P} />
      <path d="m430 549 170-2 30 2-60 3-30 2-60-1z" fill="#101010" />
      <g clipPath="url(#land)">
        <rect x="100" y="450" width="600" height="110" fill="url(#ground)" />
        <path d="M152 464h95v8l-60 2-38 4z" fill="#d1ccc4" />
        <path d="m240 474 20-17 8-4 10 4 25-2 50-2 12 2 20 14-30 8-40 4-25-4-30-2z" fill="url(#hill)" />
        <path d="m240 474 20-17 8-4 20 5 22 22-35-4z" fill="#dfdad4" /><path d="m268 454-12 17M275 458l-4 14M282 458l5 15" stroke="#c3bdb6" />
        <path d="m305 480 25-16 12 1 18-5 17 9-22 3z" fill="#cfc9c1" /><path d="m290 458 16 20M330 465l-16 14M345 464l-15 14M360 456l10 14" stroke="#a39d95" fill="none" strokeWidth="1.500" />
        <path d="m165 482 12-8 15 3 10 8-18-1zM202 487l12-8 18 2 12 8-18 1z" fill="#dad5ce" />
        <path d="m150 487 6 9-40 55h-12l40-66z" fill="#8b867e" /><path d="m150 487-10 25M145 497l-18 32M138 515l-22 32" stroke="#645f59" strokeWidth="2" fill="none" strokeDasharray="5 2" />
        <path d="m125 538 27-33 15-4 10-12 25 2 14 14-30 33z" fill="#d0cac2" />
        <path d="m145 546 32-42 30 4 32 5 35 20 22 13-80 1z" fill="#dcd7d0" />
        <path d="m170 509 36-2 40 9 25 17" stroke="#8b857c" strokeWidth="3" strokeDasharray="4 2" fill="none" />
        <path d="m160 521 15-12 35 8 28 12M178 500l15 6M186 493l10 9M200 490l8 10M208 493l10 10M216 499l28 12 30 25M150 530l20-22" stroke="#8a857d" strokeWidth="1.400" fill="none" />
        <path d="m158 494 40-6 24 7 25 5 24 3" stroke="#d8d3cb" strokeWidth="3" fill="none" strokeDasharray="14 3" />
        <path d="m284 508 10 2 5 12 8 6-16 2-9-12z" fill="#cdc7bf" /><path d="m302 495 11-7 9 3 4 3-8 2zM426 482l9-6 5 1 10 6z" fill="#ddd8d1" />
        <path d="m306 540 15-16 40-2 50 2 18 12-50 8z" fill="#c4beb6" />
        <g stroke="#d5d0c9" strokeWidth="2" fill="none"><path d="M387 496q30-14 85-10l12 1M370 507l50 3 45 3M378 519l70 2M322 504h22M420 465h30M480 470l45 1M390 503l30-8 55 1" /></g>
        <path d="M543 491q50 0 100 2l-35 4-55-2zM532 505l90 1-5 3-82-1zM520 520h90l-2 2-88-1z" fill="#d8d2cb" />
        <path d="m585 486 12-10 28-2 22 4 8 6-15 3-40 1z" fill="#d4cfc8" />
        <path d="M560 472h75l3 3h-78z" fill="#dad5ce" />
        <path d="m492 486-20 24-20 3M540 493l-26 42M556 474l12 3-2 10M672 490l-18 26" stroke="#7f7a72" strokeWidth="4" fill="none" strokeDasharray="4 1" opacity=".75" />
        <path d="M100 450h600v110H100z" filter="url(#grain)" opacity=".4" />
        <path d="m115 540 40-45 60 2 60 20 28 30-160 3zM150 462h90v10h-90zM590 474h60v13h-60zM170 484l80-6v10z" filter="url(#shade)" opacity=".6" />
        <path d="m306 542 15-18 30-2 70 2 14 12-65 12z" filter="url(#shade)" />
        <path d="m170 508 70 6 30 20-60-10zM306 542l15-18 30-2 70 2 14 12-65 12z" filter="url(#speck)" opacity=".5" />
        <path d="m380 498 30-6 60-2-10 6-50 4zM372 507l50 1 40 5-45 3-40-4z" filter="url(#speck)" opacity=".5" />
        <path d="m104 550 110-2 160-2 150-9 116-2v11l-90-2-130 3-130 4-190 3z" fill="#ddd8d2" /><path d="m106 549 268-2 150-8 116 3" stroke="#b1aca4" fill="none" /><path d="m106 555 190-2 130-3" stroke="#8d8880" strokeWidth="2" fill="none" />
        <path d="m595 543 12-6 8 7 12-6 10 8" stroke="#9a948c" strokeWidth="1.500" fill="none" />
        <g fill={P}>
          <path d="m254 488 6-5 24-3 6 3 5 1-18 4-18 3zM247 494h18l-2 2h-16zM247 496l13 4 22 2-1 1-25-2zM215 494h14v2h-14zM231 496h12v2h-12zM363 493h16v2h-16zM380 520h18l22 3-40 1zM356 523h6v2h-6z" />
          <path d="m400 497 22 2 10 3h-30zM420 510l25 3 12-3 6 3-30 3-20 1zM497 490l15-5 16-3 10 3-20 3-16 4zM408 536l28-1v4h-22zM426 529l40 1-30 2zM450 477h14v2h-14zM400 511h28l-8 2zM570 485h13v2h-13z" />
          <path d="M554 496h63l2 9-78-1zM535 509h82l-3 10-88-2zM520 523h93l-8 9-87-1zM646 522l29-24 9-5-8 12-24 20zM682 485h9l-2 8-9 1zM696 476h12l-14 14z" />
        </g>
        <path d="M440 486h20M500 491h10M478 523h8M408 478h4M378 479h5M355 484h3M465 528v8" stroke={P} strokeWidth="1.500" />
        <path d="m641 533 8 8 13-16 12-14" stroke="#c5bfb7" strokeWidth="4" fill="none" />
      </g>
    </svg>
  );
}

const mag = (
  <>
    <circle cx="13" cy="8" r="4.700" fill="#e2f1fb" stroke="#1d4566" strokeWidth="1.500" />
    <path d="m9.500 11.500-6 6.500" stroke="#e07b1d" strokeWidth="2.400" />
  </>
);
const tick = <path d="M14 18h6l-3 3z" fill="#000" />;
const win = <path d="M3.500 6.500h15v10h-15z" fill="#fff" stroke={BLUE} strokeWidth="1.300" />;
const Sep = () => <span className="mr-[3px] ml-0.5 h-[22px] w-px bg-[#a8a8a8]" />;

function ViewToolbar() {
  return (
    <div className="flex h-6 shrink-0 items-center bg-[#f0f0f0] pl-px">
      <IconCell label="View attributes">
        <path d="M3.500 4.500h15v12h-15z" fill="#fff" stroke={BLUE} /><path d="M3 5.500h16" stroke={BLUE} strokeWidth="3" /><circle cx="9" cy="14.500" r="4.300" fill={BLUE} /><path d="M9 12v1M9 14v3" stroke="#fff" strokeWidth="1.500" /><path d="M14 12.500h5v6h-5z" fill="#fff" stroke={BLUE} /><path d="M15 15.500h3" stroke={BLUE} />
      </IconCell>
      <button aria-label="More" className="flex w-[15px] justify-center"><Caret className="text-black" /></button>
      <IconCell label="Display style"><path d="m9 4 8-1.500 2 2v9l-8 1-2-2z" fill="#eaf7e4" stroke="#58b13e" strokeWidth="1.200" /><circle cx="8" cy="14" r="4.800" fill="#bfe1f5" stroke="#7db9de" />{tick}</IconCell>
      <IconCell label="Brightness"><path d="M11 3v16M3 11h16M5.500 5.500l11 11M16.500 5.500l-11 11" stroke="#444" strokeWidth="1.300" /><circle cx="11" cy="11" r="4.800" fill="#c3cad0" stroke="#555" /><path d="M11 7.500a3.500 3.500 0 0 1 0 7z" fill="#68b7e8" /></IconCell>
      <button aria-label="More" className="flex w-[15px] justify-center"><Caret className="text-black" /></button>
      <Sep />
      <IconCell label="Update view"><path d="M12 3v8" stroke={BLUE} strokeWidth="2.500" /><path d="M7 10.500h9V13H7z" fill={BLUE} /><path d="M7 13.500h9l1 5H5z" fill="#7b8a98" /></IconCell>
      <IconCell label="Zoom in">{mag}<path d="M10.500 8h5M13 5.500v5" stroke="#1d4566" strokeWidth="1.200" /></IconCell>
      <IconCell label="Zoom out">{mag}<path d="M10.500 8h5" stroke="#1d4566" strokeWidth="1.200" /></IconCell>
      <IconCell label="Window area"><path d="M3.500 4.500h15v14h-15z" stroke="#222" strokeDasharray="1.500 1.500" />{mag}</IconCell>
      <IconCell label="Fit view"><path d="M3.500 4.500h15v13h-15z" fill="#fff" stroke={BLUE} strokeWidth="1.300" /><path d="M3 5h16" stroke={BLUE} strokeWidth="2.500" /><path d="M5.500 8h2M14.500 8h2M5.500 15h2M14.500 15h2" stroke={BLUE} strokeWidth="2" /></IconCell>
      <IconCell label="Rotate view"><path d="m3 10 6-5v3c5-1 8 1 8 5-3-3-5-2-8-1v3z" fill={BLUE} /><path d="M9 14q3 3 6 1l-1-2 5 1-1 5-1-2q-5 2-8-3z" fill="#50a7e6" /><path d="M14 4l3 3v7" stroke={BLUE} strokeWidth="1.800" />{tick}</IconCell>
      <IconCell label="Pan view"><path d="M5 10 3.500 5.500q1-2 2.500 0L8 8 6.500 4q1-2 2.500 0l2 4-1-4q1.500-1 2.500.500l3 5q3 3 3 6l-3 3q-6 0-8-4l-4-3q0-2 2-1.500z" fill="#fff" stroke="#333" /></IconCell>
      <Sep />
      <IconCell label="Walk"><path d="M6 4q3-2 3 2T7 11 4.500 8 6 4zM6.500 12.500l2.500-.500v2q-2 2-2.500-1.500zM15 7q3-1 3 3t-3 5-2-3 2-5zM12 16l3 .500q0 3-2 2.500t-1-3z" fill="#111" /></IconCell>
      <IconCell label="Fly"><path d="M3 8q5-4 9-2l7 8-2 3q-8-1-14-9z" fill="#e6e6e6" stroke="#777" /><path d="m5 9 13 6M11 6l-2 5" stroke="#888" /></IconCell>
      <IconCell label="Navigate view"><path d="M4.500 4.500h13v11h-13z" fill="#fff" stroke={BLUE} /><path d="M4 5.500h14" stroke={BLUE} strokeWidth="2.500" /><path d="m11 12 2-2 2 2h3l-3 5H8z" fill="#55566e" /></IconCell>
      <IconCell label="View previous">{win}<path d="M3 6.500h16" stroke={BLUE} strokeWidth="2" /><path d="M15 12H8m3-2.500L8 12l3 2.500" stroke={BLUE} strokeWidth="1.800" /></IconCell>
      <IconCell label="View next">{win}<path d="M3 6.500h16" stroke={BLUE} strokeWidth="2" /><path d="M7 12h7m-3-2.500 3 2.500-3 2.500" stroke={BLUE} strokeWidth="1.800" /></IconCell>
      <Sep />
      <IconCell label="Copy view"><path d="M9.500 4.500h9v6h-9zM3.500 10.500h9v7h-9z" fill="#fff" stroke={BLUE} /><path d="M9 5h10M3 11h10" stroke={BLUE} strokeWidth="2" /><path d="M15 17h3v-4" stroke="#222" /></IconCell>
      <IconCell label="Clip volume"><path d="m3.500 5 7 3 8-3-3 10-5 4-5-4zM11 8v11M3.500 5l7.500-2 7.500 2" stroke="#4c535a" strokeWidth="1.200" />{tick}</IconCell>
      <IconCell label="Clip mask"><path d="m4 7 5-3 5 2v6l-5 2-5-2z" fill="#e9f6fd" stroke={BLUE} strokeWidth="1.300" /><path d="m9 9 7 8M17 8l-8 9" stroke="#444" strokeWidth="1.300" /><circle cx="9" cy="17.500" r="1.700" stroke="#333" />{tick}</IconCell>
      <IconCell label="Set display depth"><path d="m4 6 5-3 5 2 2 3-6 5-6-2z" fill="#e9f6fd" stroke={BLUE} strokeWidth="1.300" /><path d="M7.500 10.500h11v8h-11z" stroke="#222" strokeDasharray="1.500 1.500" /></IconCell>
    </div>
  );
}

function WindowButton({ label, red, children }: { label: string; red?: boolean; children: ReactNode }) {
  return (
    <button aria-label={label} className={`flex h-[18px] w-8 items-center justify-center rounded-xs border ${red ? "border-[#5a1717] bg-linear-to-b from-[#e09b8c] via-[#c5513b] via-50% to-[#cc6a52]" : "border-[#6b7f98] bg-linear-to-b from-[#cbdcef] via-[#a7bedb] via-50% to-[#bdd0e8]"}`}>
      <svg viewBox="0 0 14 12" className="h-3 w-[14px]" fill="none">{children}</svg>
    </button>
  );
}

function ViewWindow() {
  return (
    <section className="flex min-w-0 flex-[743] bg-[#93a3b5] pr-[6px] pl-0.5">
      <div className="flex min-w-0 flex-1 flex-col rounded-t-md border border-[#222] border-r-[#19c5dd] border-b-[#19c5dd] bg-[#b9d1ea] pr-[6px] pb-[6px] pl-[5px]">
        <div className="-mr-[6px] -ml-[5px] flex h-[30px] shrink-0 items-center rounded-t-md bg-linear-to-b from-[#98b4d2] to-[#b9d1ea] pt-1.5 pr-2 pl-2">
          <svg viewBox="0 0 16 16" className="h-4 w-4"><path d="M1 3 4 1h11v12l-3 2H1z" fill="#e7f0f9" /><path d="m3 5 5 1v8l-5-2z" fill="#12a5f4" /><path d="m8 6 4-1v8l-4 1z" fill="#0b4fc4" /><path d="m3 5 4-1 5 1-4 1z" fill="#6fd0ff" /></svg>
          <h2 className="ml-[3px] flex-1 text-xs text-[#1a1a1a]">View 1, 3D Metric Design</h2>
          <div className="flex gap-0.5">
            <WindowButton label="Minimize view"><path d="M2.500 5.500h9v3h-9z" fill="#fff" stroke="#555" /></WindowButton>
            <WindowButton label="Maximize view"><path d="M2.500 2.500h9v7h-9z" fill="#fff" stroke="#555" /><path d="M5.500 4.500h3v2.500h-3z" fill="#7d97b8" stroke="#555" /></WindowButton>
            <WindowButton label="Close view" red><path d="m3.500 2.500 7 7m0-7-7 7" stroke="#4d2525" strokeWidth="4" /><path d="m3.500 2.500 7 7m0-7-7 7" stroke="#fff" strokeWidth="2.300" /></WindowButton>
          </div>
        </div>
        <ViewToolbar />
        <div className="min-h-0 flex-1 overflow-hidden bg-black"><Terrain /></div>
      </div>
    </section>
  );
}

/* ---------- MineModeller panel ---------- */

function CutFillChart() {
  const y = (v: number) => 598.5 - v * 0.003385;
  const x = (v: number) => 825 + (v - 1578) * 35;
  const ticks = Array.from({ length: 46 }, (_, i) => 1577.8 + i * 0.4).filter((t) => x(t) < 1460);
  const years = Array.from({ length: 9 }, (_, i) => 1578 + 2 * i);
  return (
    <svg viewBox="765 357 698 270" preserveAspectRatio="none" className="h-[270px] w-full" role="img" aria-label="Cut and Fill Profile" fontSize="11" fill="#333">
      <text x="1155" y="386" fontSize="24" textAnchor="middle" fill="#6f6f6f">Cut and Fill Profile</text>
      <g stroke="#c6c6c6" fill="none" shapeRendering="crispEdges">
        <path d="M813.500 405.500h646v193h-646z" />
        {[1, 2, 3, 4, 5].map((n) => <path key={n} d={`M808 ${Math.round(y(n * 10000)) + 0.5}H1459`} />)}
        <path d="M808 598.500h6" />
        {Array.from({ length: 17 }, (_, i) => <path key={i} d={`M811 ${Math.round(y(i * 3333.3)) + 0.5}h3`} />)}
        {ticks.map((t) => <path key={t} d={`M${Math.round(x(t - 0.2)) + 0.5} 599v2`} />)}
        {[...years, 1596].map((v) => <path key={v} d={`M${Math.round(x(v)) + 0.5} 599v5`} />)}
      </g>
      <path d="M813.500 533.500 885 423l72 24 71.500 90 73 37 71 18 72 6.500h-431z" fill="#dc4158" fillOpacity=".37" />
      <path d="M813.500 533.500 885 423l72 24 71.500 90 73 37 71 18 72 6.500" fill="none" stroke="#cba8ad" />
      <path d="m813.500 598 71.500-9.500 74 1.500 68 8.500H813.500z" fill="#7c8ab5" fillOpacity=".35" stroke="#a98fa0" strokeWidth=".7" />
      {[0, 1, 2, 3, 4, 5].map((n) => <text key={n} x="802" y={y(n * 10000) + 4} textAnchor="end">{n * 10000}</text>)}
      {years.map((v) => <text key={v} x={x(v)} y="618" textAnchor="middle">{v}</text>)}
      <text x="1462" y="618" textAnchor="end">1596</text>
    </svg>
  );
}

const RIBBON_TABS: [string, string][] = [
  ["File", "w-[38px]"], ["Peg", "w-[46px]"], ["Import / Export", "w-[99px]"], ["Survey", "w-[61px]"],
  ["Surfaces", "w-[68px]"], ["Utilities", "w-[58px]"], ["Help", "w-[49px]"],
];

function ToolLink({ label, children }: { label: string; children: ReactNode }) {
  return (
    <button className="flex h-[25px] items-center gap-1 whitespace-nowrap">
      <svg viewBox="0 0 16 16" className="h-4 w-4" fill="none">{children}</svg>
      {label}
    </button>
  );
}

function Action({ label, className, children }: { label: string; className: string; children: ReactNode }) {
  return (
    <button className={`flex h-[27px] items-center gap-[3px] rounded-sm border border-[#c8c8c8] bg-[#fbfbfb] whitespace-nowrap ${className}`}>
      <svg viewBox="0 0 16 16" className="h-4 w-4" fill="none">{children}</svg>
      {label}
    </button>
  );
}

function MinePanel() {
  const [tab, setTab] = useState("Graph");
  return (
    <section className="mr-px flex min-w-0 flex-[715] flex-col bg-[#efefef] font-['DejaVu_Sans_Condensed','DejaVu_Sans',sans-serif] text-[11px] text-[#333]">
      <header className="flex h-[21px] shrink-0 items-center border-b border-white bg-[#0090f8] pl-0.5 font-['Noto_Sans',sans-serif] text-xs text-white">
        <h2 className="flex-1">MineModeller Connect</h2>
        <svg viewBox="0 0 46 12" className="mr-1 h-3 w-[46px]" fill="none" stroke="#fff"><path d="M2 4h9L6.500 8.500z" fill="#fff" stroke="none" /><path d="M20.500 1.500h4v5h-4zM18.500 6.500h8M22.500 6.500V11M23.500 2v5" /><path d="m35 2.500 7.500 7.500m0-7.500L35 10" strokeWidth="1.800" /></svg>
      </header>
      <nav className="flex h-[26px] shrink-0 items-stretch bg-[#4f6e9f] text-white">
        {RIBBON_TABS.map(([name, width]) => (
          <button key={name} className={`shrink-0 ${width} ${name === "Surfaces" ? "bg-[#dcdcdc] text-[#222]" : ""}`}>{name}</button>
        ))}
      </nav>
      <div className="flex h-[100px] shrink-0 border-b border-[#c4c4c4] bg-[#dcdcdc]">
        <div className="flex w-[223px] shrink-0 flex-col border-r border-[#c4c4c4] pl-2">
          <div className="flex gap-[5px] pt-1">
            <div className="flex flex-col">
              <ToolLink label="Create from selection"><rect width="16" height="16" fill="#fff" /><path d="M8 0h8v7l-3-1-4-3z" fill="#5a5b2c" /><path d="M7 2h4v2H7zM12 4h3v2h-3zM9 0h2v2H9z" fill="#111" /><circle cx="3.500" cy="13" r="2" stroke="#111" /><path d="M9.500 9.500h4v4h-4zM3 9l1-3 3-2M5 3.500h2v2" stroke="#111" /></ToolLink>
              <ToolLink label="Create from strings"><rect width="16" height="16" fill="#fff" /><path d="M3 2 9 .500 14 4l1 6-4 2v3H5L4 12 1.500 9z" fill="#33269a" stroke="#111" /><path d="m4 3 5-2 4 3-3 2z" fill="#55a820" /><path d="m5 11 6 1-1 3H5z" fill="#9c2a80" /></ToolLink>
              <ToolLink label="Contours"><rect width="16" height="16" fill="#fff" /><path d="M2 4q4-4 9-2 5 2 4 7t-6 6-8-4q-1-4 1-7z" stroke="#111" /><circle cx="9" cy="8.500" r="3.700" stroke="#111" /><path d="M9 6.500v4l2-2z" stroke="#111" strokeWidth=".9" /><path d="M1 4 4 1" stroke="#111" /></ToolLink>
            </div>
            <div className="flex flex-col gap-2 pt-2">
              <ToolLink label="Profile"><path d="M0 3h15v11H0z" fill="#f29a3c" /><path d="M1.500 4v9h13" stroke="#fff" strokeDasharray="1 1" /><path d="m4 10 3-3 2 1 3-3" stroke="#fff" strokeWidth="1.300" /></ToolLink>
              <ToolLink label="Cut and Fill"><rect width="16" height="16" fill="#fff" /><path d="M0 6h4l4 5 4-5h4v10H0z" fill="#e2a283" /><path d="m0 4 4 4H0zM16 2v5l-4 1z" fill="#d22" /><path d="M5 8h6l-3 4z" fill="#2f9a3a" /><path d="m0 5 3 2 5 1.500L12 7l4-6M4 8l4 4 4-4" stroke="#161a55" /></ToolLink>
            </div>
          </div>
          <p className="pt-1.5 pr-2 text-center">Surfaces</p>
        </div>
        <button aria-label="Collapse" className="mt-auto mr-1 mb-2 ml-auto"><svg viewBox="0 0 10 6" className="h-1.5 w-2.5" fill="none"><path d="m1 5 4-4 4 4" stroke="#555" strokeWidth="1.200" /></svg></button>
      </div>

      <div className="flex shrink-0 flex-col pt-[15px] pr-1 pl-1.5">
        <h3 className="leading-4 font-bold text-black">Cut and fill</h3>
        <div className="mt-1.5 ml-px flex h-[21px] items-stretch pl-0.5" role="tablist">
          {[["New Surfaces", "w-[78px]"], ["Base Surfaces", "w-20"], ["Perimeter", "w-[58px]"], ["Levels", "w-9"]].map(([name, width]) => (
            <button key={name} role="tab" aria-selected={tab === name} onClick={() => setTab(name)} className={`shrink-0 border border-b-0 border-[#9e9e9e] bg-[#dcdcdc] whitespace-nowrap ${width}`}>{name}</button>
          ))}
          <button role="tab" aria-selected={tab === "Graph"} onClick={() => setTab("Graph")} className="relative z-10 -mt-[9px] h-[39px] w-[55px] shrink-0 border-8 border-[#00ff00] bg-[#f3f3f3]">Graph</button>
        </div>
        <div className="ml-px border border-[#9e9e9e] pt-[3px] pl-1">
          <div className="border border-r-0 border-[#9e9e9e] bg-white"><CutFillChart /></div>
          <label className="flex h-7 items-center gap-1">
            <input type="checkbox" className="h-[13px] w-[13px] appearance-none rounded-[3px] border border-[#555] bg-[#f6f6f6]" />
            Vertical Orientation
          </label>
        </div>
        <div className="ml-px flex pt-1.5 text-[#222]">
          <Action label="Close" className="w-[74px] pl-[7px]"><path d="m4.500 4.500 7 7m0-7-7 7" stroke="#111" strokeWidth="2.300" /></Action>
          <Action label="Zoom" className="ml-3 w-[74px] pl-[7px]"><circle cx="6.500" cy="6" r="4.500" fill="#f3e7ea" stroke="#7b8791" strokeWidth="1.200" /><path d="M4 6h5M6.500 3.500v5" stroke="#c2334b" strokeWidth="1.300" /><path d="m10 9.500 5 5" stroke="#b8892e" strokeWidth="2.800" /></Action>
          <Action label="Calculate" className="ml-[9px] w-[100px] pl-2"><path d="M1.500 0h13v16h-13z" fill="#0c5c2b" /><path d="M3.500 2h9v4h-9z" fill="#e9f3ec" /><path d="M3.500 7.500h2v2h-2zM7 7.500h2v2H7zM10.500 7.500h2v2h-2zM3.500 10.500h2v1.500h-2zM7 10.500h2v1.500H7zM10.500 10.500h2v1.500h-2zM3.500 13h2v1.500h-2zM7 13h2v1.500H7zM10.500 13h2v1.500h-2z" fill="#fff" /></Action>
          <Action label="Clear Results" className="ml-[9px] w-[106px] pl-1"><path d="M2.500 2.500h11v11h-11z" fill="#f4f7ff" stroke="#5f81cf" /><path d="M5 8h6" stroke="#111" strokeWidth="2" /></Action>
          <Action label="Print" className="ml-[9px] w-[74px] pl-2"><path d="M4.500 1h7v6h-7z" fill="#fff" stroke="#7f93b5" /><path d="M1 6.500 3 5h1.500v3h7V5H13l2 1.500v5q0 1-1 1H2q-1 0-1-1z" fill="#8fa9d6" stroke="#34568f" /><path d="M4 10.500h8l1 4.500H3z" fill="#dff2ff" stroke="#4b86b5" /></Action>
        </div>
      </div>

      <div className="mt-[14px] mr-px flex h-[65px] shrink-0 overflow-hidden border border-[#a3a3a3] bg-white text-xs text-black">
        <div className="min-w-0 flex-1 overflow-hidden pt-1 pl-4">
          <table className="w-[510px] table-fixed border-collapse text-left [&_td]:h-[19px] [&_td]:border [&_td]:border-dotted [&_td]:border-black [&_td]:px-[7px] [&_td]:leading-4">
            <colgroup><col className="w-[234px]" /><col /></colgroup>
            <tbody><tr><td>Cell Size</td><td>10.000</td></tr><tr><td /><td /></tr></tbody>
          </table>
          <table className="-mt-px w-[510px] table-fixed border-collapse text-left [&_td]:h-5 [&_td]:border [&_td]:border-black [&_th]:h-[19px] [&_th]:border [&_th]:border-black [&_th]:px-[7px] [&_th]:leading-4 [&_th]:font-normal">
            <colgroup><col className="w-[73px]" /><col className="w-[123px]" /><col className="w-[123px]" /><col className="w-[95px]" /><col /></colgroup>
            <thead><tr>{["ID", "From", "To", "Cut", "Fill"].map((h) => <th key={h}>{h}</th>)}</tr></thead>
            <tbody><tr><td /><td /><td /><td /><td /></tr></tbody>
          </table>
        </div>
        <div className="m-px flex w-[15px] flex-col bg-[#f0f0f0]">
          <button aria-label="Scroll up" className="flex h-[15px] items-center justify-center border border-[#a3a3a3] bg-white"><svg viewBox="0 0 7 4" className="h-1 w-[7px]"><path d="M3.500 0 7 4H0z" fill="#666" /></svg></button>
          <span className="h-[18px] border border-[#a3a3a3] bg-white" />
          <button aria-label="Scroll down" className="mt-auto flex h-[15px] items-center justify-center border border-[#a3a3a3] bg-white"><Caret /></button>
        </div>
      </div>
      <footer className="mt-auto flex h-[23px] shrink-0 items-center border-t border-b border-t-[#d2d2d2] border-b-[#b5b5b5] pt-0.5 pl-1 text-xs text-black">
        <span className="flex-1">Data loaded for peg group Demo</span>
        <button className="flex items-center gap-1.5">Projection: &lt;None&gt; <Caret className="text-[#333]" /></button>
        <button className="ml-2 flex items-center gap-1.5">Demo <Caret className="text-[#333]" /></button>
        <svg viewBox="0 0 12 12" className="mt-1 mr-0.5 ml-1 h-3 w-3" fill="#9a9a9a"><path d="M9 1h2v2H9zM9 5h2v2H9zM9 9h2v2H9zM5 5h2v2H5zM5 9h2v2H5zM1 9h2v2H1z" /></svg>
      </footer>
    </section>
  );
}

/* ---------- status bar ---------- */

function Coord({ axis, value, className }: { axis: string; value: string; className: string }) {
  return (
    <label className={`flex items-center gap-2 ${className}`}>
      <span className="text-sm font-bold text-[#222]">{axis}</span>
      <input defaultValue={value} className="h-[22px] min-w-0 flex-1 border border-[#a9abb0] bg-white px-1 text-xs text-[#777] outline-none" />
    </label>
  );
}

function StatusBar() {
  const arrow = <Caret className="mt-1 text-black" />;
  return (
    <div className="h-[18px] shrink-0 overflow-hidden bg-[#d6d6d6]">
      <div className="flex h-8 w-[864px] items-center bg-[#f0f0f0] pt-1 pl-2.5">
        <svg viewBox="0 0 26 26" className="h-[26px] w-[26px]"><circle cx="13" cy="13" r="11.500" fill="#58bb35" stroke="#2f8a1c" /><path d="m5 13 8-8v4.500h7v7h-7V21z" fill="#fff" /></svg>
        <span className="mx-1">{arrow}</span>
        <svg viewBox="0 0 26 26" className="h-[26px] w-[26px]"><circle cx="13" cy="13" r="11.500" fill="#c9c9c9" stroke="#a8a8a8" /><path d="m21 13-8-8v4.500H6v7h7V21z" fill="#f2f2f2" /></svg>
        <span className="mx-1">{arrow}</span>
        <svg viewBox="0 0 26 26" className="h-[26px] w-[26px]"><path d="M2 2q4 6 10 5 11-2 13 9l-8 8Q4 22 3 14q2-2 3-3Q3 8 2 2z" fill="#a9b4bd" stroke="#5f6b75" /><path d="M6 11q8-3 16 4" stroke="#5f6b75" fill="none" /></svg>
        <span className="mx-1">{arrow}</span>
        <button className="ml-[5px] flex h-[22px] w-[146px] items-center gap-0.5 rounded-sm border border-[#b9b9b9] bg-[#f8f8f8] px-0.5 text-xs text-black">
          <svg viewBox="0 0 18 16" className="h-4 w-[18px]" fill="#fff" stroke={BLUE}><path d="M1.500 2.500h11v8h-11zM6.500 6.500h11v8h-11z" strokeWidth="1.500" /></svg>
          <span className="flex-1 text-left whitespace-nowrap">3D Metric Design</span>{arrow}
        </button>
        <span className="mx-1 h-6 w-px bg-[#aaa]" />
        <svg viewBox="0 0 26 26" className="h-[26px] w-[26px]" fill="#fff" stroke={BLUE}><path d="M2.500 2.500h14v12h-14zM9.500 8.500h14v12h-14z" strokeWidth="1.500" /><path d="M2 4h15M9 10h15" strokeWidth="2.500" /></svg>
        <span className="mx-[3px] h-6 w-px bg-[#aaa]" />
        <div className="flex text-[11px] text-black">
          {[1, 2, 3, 4, 5, 6, 7, 8].map((n) => (
            <button key={n} className={`h-5 w-4 border-l border-[#222] ${n === 1 ? "bg-[#79aedd]" : "bg-[#f0f0f0]"}`}>{n}</button>
          ))}
        </div>
        <span className="ml-1 h-6 w-px bg-[#c5c5c5]" />
        <Coord axis="X" value="2888330.095" className="ml-3 w-[122px]" />
        <Coord axis="Y" value="-2618.673" className="ml-[13px] w-[122px]" />
        <Coord axis="Z" value="1551.746" className="ml-[13px] w-[122px]" />
      </div>
    </div>
  );
}

export default function App() {
  return (
    <main className="flex h-screen flex-col overflow-hidden border border-black bg-[#f0f0f0] font-['Noto_Sans',sans-serif] leading-4">
      <TitleBar />
      <RibbonTabs />
      <div className="flex h-[95px] shrink-0 bg-[#fafafa]">
        <AttributesGroup />
        <PrimaryGroup />
        <SelectionGroup />
        <PlacementGroup />
        <ManipulateGroup />
        <ModifyGroup />
        <GroupsGroup />
      </div>
      <div className="flex min-h-0 flex-1">
        <ViewWindow />
        <MinePanel />
      </div>
      <StatusBar />
    </main>
  );
}
